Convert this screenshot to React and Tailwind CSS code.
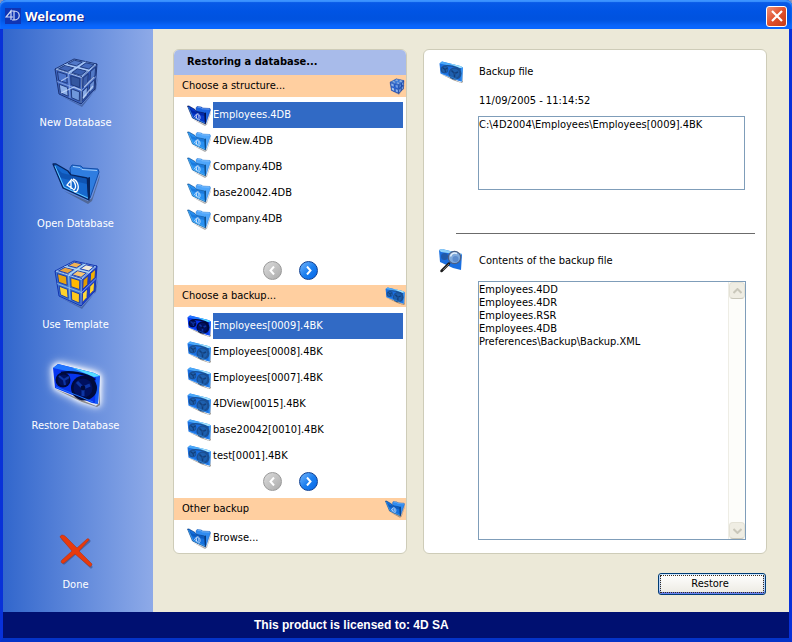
import { useState } from 'react';

const structures = ['Employees.4DB', '4DView.4DB', 'Company.4DB', 'base20042.4DB', 'Company.4DB'];

const backups = [
  'Employees[0009].4BK',
  'Employees[0008].4BK',
  'Employees[0007].4BK',
  '4DView[0015].4BK',
  'base20042[0010].4BK',
  'test[0001].4BK',
];

const contents = [
  'Employees.4DD',
  'Employees.4DR',
  'Employees.RSR',
  'Employees.4DB',
  'Preferences\\Backup\\Backup.XML',
];

// Cube faces, each as four corners in order
const cubeFaces = {
  top: [[3, 12], [22, 2], [45, 7], [30, 20]],
  left: [[3, 12], [30, 20], [29, 47], [7, 37]],
  right: [[30, 20], [45, 7], [43, 32], [29, 47]],
};

const pointOn = ([a, b, c, d], u, v) =>
  [0, 1]
    .map((i) => (1 - u) * (1 - v) * a[i] + u * (1 - v) * b[i] + u * v * c[i] + (1 - u) * v * d[i])
    .join(',');

const panes = (face) =>
  [[0, 0], [0.5, 0], [0, 0.5], [0.5, 0.5]].map(([u, v]) =>
    [
      pointOn(face, u + 0.08, v + 0.08),
      pointOn(face, u + 0.42, v + 0.08),
      pointOn(face, u + 0.42, v + 0.42),
      pointOn(face, u + 0.08, v + 0.42),
    ].join(' ')
  );

const outline = (face) => face.map((p) => p.join(',')).join(' ');

const cubeColors = {
  wire: {
    frame: { top: '#7fa6e6', left: '#3f66c2', right: '#2f55b2' },
    pane: {
      top: ['#4166b8', '#5279c9', '#3a60b2', '#456cc0'],
      left: ['#4c75cc', '#34569f', '#8fb2ea', '#6f97dc'],
      right: ['#3d60ad', '#5279c6', '#86a9e4', '#6c92d8'],
    },
    edge: '#1c3578',
    shine: '#b9d2fa',
  },
  gold: {
    frame: { top: '#7db4ea', left: '#3c78cf', right: '#1d3fd0' },
    pane: {
      top: ['#e9a33c', '#f2b453', '#f5c472', '#f0ead8'],
      left: ['#e8a40e', '#ffb900', '#ffd22c', '#ffc91c'],
      right: ['#e29a00', '#f2b000', '#ffda3a', '#ffd42a'],
    },
    edge: '#1434b0',
    shine: '#c4e2fb',
  },
  small: {
    frame: { top: '#2a74e4', left: '#1650cc', right: '#1242b0' },
    pane: {
      top: ['#9fc0ea', '#b4cdec', '#8db3ea', '#a5c4ee'],
      left: ['#8fb4ec', '#6d9ce8', '#b4cef2', '#8fb4ec'],
      right: ['#6b98e4', '#7ba6e8', '#a5c3ee', '#82aae8'],
    },
    edge: '#0d3590',
    shine: '#6fa8f4',
  },
};

function CubeIcon({ variant, className }) {
  const c = cubeColors[variant];
  return (
    <svg viewBox="0 0 48 50" className={className} aria-hidden="true">
      <path d="M9 39 29 48 44 33 46 20 42 35 30 50Z" fill="#16254f" opacity="0.35" />
      {Object.keys(cubeFaces).map((name) => (
        <g key={name}>
          <polygon points={outline(cubeFaces[name])} fill={c.frame[name]} stroke={c.edge} strokeWidth="1" strokeLinejoin="round" />
          {panes(cubeFaces[name]).map((p, i) => (
            <polygon key={i} points={p} fill={c.pane[name][i]} stroke={c.edge} strokeWidth="0.9" />
          ))}
        </g>
      ))}
      <path d="M4 12.2 29.6 20.4 44 7.6M16.5 16 33.5 4.8M12.5 7.5 37.5 13.6" fill="none" stroke={c.shine} strokeWidth="0.9" />
      <path d="M29.8 21 29 46M5 24.5 29.5 33.5 44 19.5M16.5 16.5 18 41" fill="none" stroke={c.shine} strokeWidth="0.7" opacity="0.75" />
      {variant === 'wire' && (
        <path d="M9 36 22 30 29 33M31 41 41 29M9 24 16 20M32 30 42 20" fill="none" stroke="#cfe1ff" strokeWidth="1.2" opacity="0.7" />
      )}
    </svg>
  );
}

const folderColors = {
  large: { back: '#2f7de0', backEdge: '#124da8', front: '#1668cf', shade: '#0b4aa6', edge: '#06245f' },
  active: { back: '#1b63e0', backEdge: '#0433a0', front: '#0538cc', shade: '#001f96', edge: '#00114f' },
  normal: { back: '#4fa6fb', backEdge: '#2579d6', front: '#2890f2', shade: '#166fd0', edge: '#0f5191' },
  dark: { back: '#318cf0', backEdge: '#1058b8', front: '#1570dd', shade: '#0850b0', edge: '#073b80' },
};

function FolderIcon({ variant, className }) {
  const c = folderColors[variant];
  return (
    <svg viewBox="0 0 48 42" className={className} aria-hidden="true">
      <path d="M12 29 36 39 40 36 48 12 47 18 40 39 36 42Z" fill="#333" opacity="0.4" />
      <path d="M18 6 20 3 29 4 31 6 46 7 47 10 38 36 20 30Z" fill={c.back} stroke={c.backEdge} strokeWidth="1" />
      <path d="M21 4.5 28 5.5 30 7.5 45 8.5" fill="none" stroke="#b9dcff" strokeWidth="0.8" />
      <path d="M1 2 4 2 16 9 19 13 35 16 37 38 11 26Z" fill={c.front} stroke={c.edge} strokeWidth="1.3" strokeLinejoin="round" />
      <path d="M2 3 10 11 35 17 35 22 9 16Z" fill={c.shade} opacity="0.65" />
      <path d="M3 4 12 25 36 36" fill="none" stroke="#5fc8ff" strokeWidth="1" />
      <path d="M35 16 38 15 38 36 36 38Z" fill={c.edge} />
      <path d="M20 17 15 23 21 27M19 19 19 27M20 18C24 20 25 27 21 28M21 17C25 18 28 25 25 29C24 30 23 30 22 29" fill="none" stroke="#fff" strokeWidth="1.3" />
    </svg>
  );
}

const tapeColors = {
  active: { body: '#0735ee', light: '#1f74ff', shine: '#52dcff', reel: '#000a3c', ring: '#00105f', hub: '#0d35a4' },
  normal: { body: '#1a6fe0', light: '#4aa8f8', shine: '#a6e4fb', reel: '#1b4f92', ring: '#1d5fae', hub: '#123f7c' },
};

function TapeIcon({ variant, className }) {
  const c = tapeColors[variant];
  return (
    <svg viewBox="0 0 48 44" className={className} aria-hidden="true">
      <path d="M3 26 16 31 44 43 47 40 48 14 48 42 45 44 30 39Z" fill="#3c3020" opacity="0.5" />
      <path d="M1 5 6 1 42 10 48 13 46 41 40 40 3 25Z" fill={c.body} />
      <path d="M1 5 6 1 42 10 48 13 43 14Z" fill={c.light} />
      <path d="M20 4.5 42 10 48 13 42 14 30 9Z" fill={c.shine} />
      <path d="M44 14 48 13 46 41 43 41Z" fill={c.light} opacity="0.6" />
      <path d="M9 10C18 8 34 10 43 17" fill="none" stroke={c.reel} strokeWidth="2.5" />
      <ellipse cx="11" cy="17" rx="7.5" ry="7.5" fill={c.reel} />
      <ellipse cx="11.5" cy="17" rx="5.5" ry="5.5" fill={c.ring} />
      <path d="M12 17 7 13M12 17 17 14M12 17 13 22" stroke={c.hub} strokeWidth="2.2" />
      <ellipse cx="32" cy="25" rx="13" ry="12.5" fill={c.reel} />
      <ellipse cx="31" cy="25" rx="9.5" ry="9.5" fill={c.ring} />
      <path d="M31 25 25 19M31 25 38 22M31 25 31 33" stroke={c.hub} strokeWidth="3" />
      <circle cx="31" cy="25" r="2.4" fill={c.reel} />
      <path d="M4 24 24 32 41 39" fill="none" stroke={c.light} strokeWidth="1" />
    </svg>
  );
}

function InspectIcon() {
  return (
    <svg viewBox="0 0 24 24" className="h-6 w-6" aria-hidden="true">
      <path d="M0 1 3 0 23 5 22 21 14 19 1 13Z" fill="#1a6fe0" />
      <path d="M0 1 3 0 23 5 22 6 2 3Z" fill="#8fd2f8" />
      <circle cx="5.5" cy="7.5" r="3.5" fill="#1f5aa8" />
      <path d="M10 14.5 2.5 22" stroke="#1c1c1c" strokeWidth="2.5" strokeLinecap="round" />
      <path d="M10 15 4 21" stroke="#888" strokeWidth="0.8" />
      <circle cx="15.5" cy="8.5" r="6.2" fill="#7fa9dc" stroke="#4a5f85" strokeWidth="1.2" />
      <path d="M11.5 7.5C12.5 4.5 15 3.5 18 4.5" fill="none" stroke="#e3effb" strokeWidth="1.4" />
      <circle cx="16.5" cy="10" r="3" fill="#5d8ccd" />
    </svg>
  );
}

function DoneIcon() {
  return (
    <svg viewBox="0 0 36 36" className="h-9 w-9" aria-hidden="true">
      <path d="M5 6 33 34M31 8 6 30" stroke="#26305c" strokeWidth="3" strokeLinecap="round" opacity="0.4" />
      <path d="M2 4C3 1 6 2 8 4L19 15 29 6C31 5 32 7 30 8L21 18 34 31C34 33 32 34 31 33L17 21 6 30C4 31 2 29 4 27L14 18Z" fill="#e83a0c" stroke="#b03218" strokeWidth="0.6" />
    </svg>
  );
}

function LogoIcon() {
  return (
    <svg viewBox="0 0 16 16" className="h-4 w-4" aria-hidden="true">
      <rect width="16" height="16" fill="#1035b4" />
      <path d="M6 12V3L1 9H8M5 3H9C16 3 16 12 9 12H7M9 3V12" fill="none" stroke="#cdd8f5" strokeWidth="1.2" />
    </svg>
  );
}

function SideItem({ label, children }) {
  return (
    <button type="button" className="flex h-[101px] w-full flex-col items-center gap-2 text-white">
      <span className="flex h-[52px] w-[64px] items-center justify-center">{children}</span>
      <span className="leading-[14px]">{label}</span>
    </button>
  );
}

function SectionBar({ title, children }) {
  return (
    <div className="flex h-[22px] items-center justify-between bg-[#ffcfa0] pr-px pl-2">
      <h2 className="pt-px">{title}</h2>
      {children}
    </div>
  );
}

function FileRow({ label, selected, icon, onClick }) {
  return (
    <button type="button" onClick={onClick} className="flex h-[26px] w-full items-center gap-0.5 text-left">
      <span className="flex h-6 w-6 shrink-0 items-center">{icon}</span>
      <span className={selected ? 'flex h-full flex-1 items-center bg-[#316ac5] pt-px text-white' : 'flex h-full flex-1 items-center pt-px'}>
        {label}
      </span>
    </button>
  );
}

function Pager() {
  return (
    <div className="flex h-[19px] justify-center gap-[17px]">
      <button
        type="button"
        disabled
        aria-label="Previous"
        className="flex h-[19px] w-[19px] items-center justify-center rounded-full border border-[#999] bg-linear-to-br from-[#dcdcdc] to-[#ababab]"
      >
        <svg viewBox="0 0 9 9" className="h-[9px] w-[9px]"><path d="M6 0.5 2.5 4.5 6 8.5" fill="none" stroke="#fff" strokeWidth="2" /></svg>
      </button>
      <button
        type="button"
        aria-label="Next"
        className="flex h-[19px] w-[19px] items-center justify-center rounded-full border border-[#0c3f94] bg-linear-to-br from-[#6db4fb] via-[#1c80ef] to-[#0566e8]"
      >
        <svg viewBox="0 0 9 9" className="h-[9px] w-[9px]"><path d="M3 0.5 6.5 4.5 3 8.5" fill="none" stroke="#fff" strokeWidth="2" /></svg>
      </button>
    </div>
  );
}

function ScrollButton({ label, path }) {
  return (
    <button
      type="button"
      disabled
      aria-label={label}
      className="flex h-[17px] w-4 items-center justify-center rounded-sm border border-[#e4e2d6] border-b-[#c9c7ba] bg-[#efede3]"
    >
      <svg viewBox="0 0 9 6" className="h-1.5 w-[9px]"><path d={path} fill="none" stroke="#c9c7ba" strokeWidth="2" /></svg>
    </button>
  );
}

export default function App() {
  const [structure, setStructure] = useState(0);
  const [backup, setBackup] = useState(0);

  return (
    <div className="min-h-screen bg-[#8796bd] font-['Tahoma','DejaVu_Sans_Condensed','Noto_Sans',sans-serif] text-[11px] text-black">
      <div className="flex min-h-screen flex-col rounded-t-[6px] bg-[#0a48e0]">
        {/* Title bar */}
        <header className="flex h-[29px] items-center justify-between rounded-t-[6px] bg-linear-to-b from-[#0a5be8] from-0% via-[#0054e4] via-40% to-[#0050d8] px-[5px] pt-[3px] shadow-[inset_0_2px_1px_#3c93ff,inset_0_-6px_5px_#0a68ff]">
          <div className="flex items-center gap-1">
            <LogoIcon />
            <h1 className="font-['Trebuchet_MS','Noto_Sans',sans-serif] text-[13px] leading-4 font-bold text-white [text-shadow:1px_1px_0_#0a1883]">
              Welcome
            </h1>
          </div>
          <button
            type="button"
            aria-label="Close"
            className="flex h-[21px] w-[21px] items-center justify-center rounded-[3px] border border-white bg-linear-to-br from-[#ef8f72] via-[#e0502c] to-[#c83c14]"
          >
            <svg viewBox="0 0 12 12" className="h-3 w-3"><path d="M1 1 11 11M11 1 1 11" stroke="#fff" strokeWidth="2.2" /></svg>
          </button>
        </header>

        <div className="flex flex-1 flex-col border-x-[3px] border-b-4 border-[#0831d9] border-b-[#0433c8]">
          <div className="flex flex-1">
            {/* Sidebar */}
            <nav className="flex w-[150px] shrink-0 flex-col bg-linear-to-r from-[#3166cc] to-[#8eaae8] pt-[27px] pr-[5px]">
              <SideItem label="New Database">
                <CubeIcon variant="wire" className="h-[50px] w-12" />
              </SideItem>
              <SideItem label="Open Database">
                <FolderIcon variant="large" className="h-[42px] w-12" />
              </SideItem>
              <SideItem label="Use Template">
                <CubeIcon variant="gold" className="h-[50px] w-12" />
              </SideItem>
              <SideItem label="Restore Database">
                <TapeIcon
                  variant="active"
                  className="h-11 w-12 overflow-visible [filter:drop-shadow(0_0_2px_#fff)_drop-shadow(0_0_3px_#fffc)_drop-shadow(0_0_4px_#fff9)]"
                />
              </SideItem>
              <button type="button" className="mt-auto mb-5 flex w-full flex-col items-center gap-[9px] text-white">
                <DoneIcon />
                <span className="leading-[14px]">Done</span>
              </button>
            </nav>

            <main className="flex flex-1 flex-col bg-[#ece9d8] pt-5 pr-[22px] pb-[17px] pl-5">
              <div className="flex flex-1 gap-4">
                {/* Structure and backup choice */}
                <section className="flex w-[234px] shrink-0 flex-col overflow-hidden rounded-md border border-[#ceccb8] bg-white">
                  <h2 className="flex h-[25px] items-center bg-[#a8bbea] pl-[13px] font-bold">Restoring a database...</h2>
                  <SectionBar title="Choose a structure...">
                    <CubeIcon variant="small" className="h-[17px] w-4" />
                  </SectionBar>
                  <div className="flex flex-1 flex-col justify-between pt-[5px] pb-[5px]">
                    <div className="pr-[3px] pl-[13px]">
                      {structures.map((name, i) => (
                        <FileRow
                          key={i}
                          label={name}
                          selected={i === structure}
                          onClick={() => setStructure(i)}
                          icon={<FolderIcon variant={i === structure ? 'active' : 'normal'} className="h-[21px] w-6" />}
                        />
                      ))}
                    </div>
                    <Pager />
                  </div>
                  <SectionBar title="Choose a backup...">
                    <TapeIcon variant="normal" className="h-[18px] w-5" />
                  </SectionBar>
                  <div className="pt-1.5 pb-[7px]">
                    <div className="pr-[3px] pb-[3px] pl-[13px]">
                      {backups.map((name, i) => (
                        <FileRow
                          key={name}
                          label={name}
                          selected={i === backup}
                          onClick={() => setBackup(i)}
                          icon={<TapeIcon variant={i === backup ? 'active' : 'normal'} className="h-[22px] w-6" />}
                        />
                      ))}
                    </div>
                    <Pager />
                  </div>
                  <SectionBar title="Other backup">
                    <FolderIcon variant="dark" className="h-[18px] w-5" />
                  </SectionBar>
                  <div className="pt-[5px] pr-[3px] pb-0.5 pl-[13px]">
                    <FileRow label="Browse..." icon={<FolderIcon variant="dark" className="h-[21px] w-6" />} />
                  </div>
                </section>

                {/* Details of the selected backup */}
                <section className="flex flex-1 flex-col rounded-md border border-[#ceccb8] bg-white pt-[11px] pr-[11px] pb-[13px] pl-[15px]">
                  <div className="flex items-center gap-4">
                    <TapeIcon variant="normal" className="h-[22px] w-6" />
                    <label htmlFor="path" className="leading-[22px]">Backup file</label>
                  </div>
                  <p className="mt-2.5 pl-10 leading-4">11/09/2005 - 11:14:52</p>
                  <div className="flex pt-[7px] pr-2.5 pl-[39px]">
                    <textarea
                      id="path"
                      readOnly
                      value={'C:\\4D2004\\Employees\\Employees[0009].4BK'}
                      className="h-[74px] flex-1 resize-none border border-[#7f9db9] bg-white pt-px leading-[13px] outline-none"
                    />
                  </div>
                  <hr className="mt-[43px] ml-[17px] border-[#6b6b6b]" />
                  <div className="mt-[15px] flex items-center gap-4">
                    <InspectIcon />
                    <h2 className="leading-[22px]">Contents of the backup file</h2>
                  </div>
                  <div className="mt-2 mr-[9px] ml-[39px] flex flex-1 border border-[#7f9db9]">
                    <ul className="flex-1 pt-px leading-[13px]">
                      {contents.map((file) => (
                        <li key={file}>{file}</li>
                      ))}
                    </ul>
                    <div className="flex w-[17px] flex-col items-end justify-between border-l border-[#eeede5] bg-[#fdfdfa]">
                      <ScrollButton label="Scroll up" path="M0.5 5 4.5 1 8.5 5" />
                      <ScrollButton label="Scroll down" path="M0.5 1 4.5 5 8.5 1" />
                    </div>
                  </div>
                </section>
              </div>

              <div className="mt-[19px] flex justify-end pr-px">
                <button
                  type="button"
                  className="h-[22px] w-[108px] rounded-[3px] border border-[#003c74] bg-linear-to-b from-white to-[#eceae2] p-px shadow-[inset_0_1px_0_#cee7ff,inset_0_-2px_0_#6982ee,inset_2px_0_0_#bcd4f6,inset_-2px_0_0_#bcd4f6]"
                >
                  <span className="flex h-full items-center justify-center border border-dotted border-[#3a2c1c] pr-1">Restore</span>
                </button>
              </div>
            </main>
          </div>

          {/* License bar */}
          <footer className="flex h-[26px] items-center bg-[#001071] pl-[251px] font-['Liberation_Sans',Arial,sans-serif] text-xs font-bold text-white">
            This product is licensed to: 4D SA
          </footer>
        </div>
      </div>
    </div>
  );
}
